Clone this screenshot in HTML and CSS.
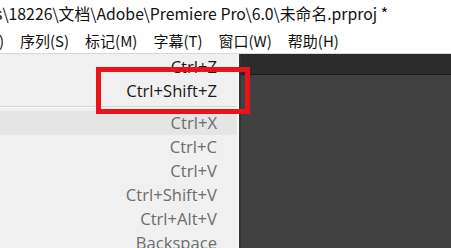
FILE: index.html
```html
<!DOCTYPE html>
<html lang="zh-CN">

<head>
	<title>Premiere Pro - 编辑菜单</title>
	<meta charset="UTF-8">
	<meta name="viewport" content="width=device-width, initial-scale=1.0">
	<link rel="stylesheet" href="styles.css">
</head>

<body>
	<div class="titlebar">
		<span class="title">s\18226\文档\Adobe\Premiere Pro\6.0\未命名.prproj *</span>
	</div>

	<div class="menubar">
		<span class="menu-item first">编辑(E)</span>
		<span class="menu-item">序列(S)</span>
		<span class="menu-item">标记(M)</span>
		<span class="menu-item">字幕(T)</span>
		<span class="menu-item">窗口(W)</span>
		<span class="menu-item">帮助(H)</span>
	</div>

	<div class="workspace">
		<div class="dropdown">
			<div class="row enabled">Ctrl+Z</div>
			<div class="row enabled">Ctrl+Shift+Z</div>
			<div class="separator"></div>
			<div class="row hover">Ctrl+X</div>
			<div class="row">Ctrl+C</div>
			<div class="row">Ctrl+V</div>
			<div class="row">Ctrl+Shift+V</div>
			<div class="row">Ctrl+Alt+V</div>
			<div class="row">Backspace</div>
		</div>

		<div class="panel">
			<div class="panel-header"></div>
			<div class="panel-body"></div>
		</div>

		<!-- annotation box round the redo shortcut -->
		<div class="mark"></div>
	</div>
</body>

</html>
```

FILE: styles.css
```css
* {
	box-sizing: border-box;
}

body {
	margin: 0;
	width: 451px;
	height: 248px;
	overflow: hidden;
	background-color: #fff;
	font-family: "Open Sans", "Noto Sans CJK SC", sans-serif;
	color: #111;
}

.titlebar {
	height: 28px;
	padding-top: 2px;
	white-space: nowrap;
	overflow: hidden;
	font-family: "Noto Sans CJK SC", sans-serif;
	font-size: 15.8px;
	line-height: 24px;
}

.title {
	display: inline-block;
	margin-left: -5px;
}

.menubar {
	height: 26px;
	display: flex;
	align-items: center;
	white-space: nowrap;
	overflow: hidden;
	border-bottom: 1px solid #d9d9d9;
	font-family: "Noto Sans CJK SC", sans-serif;
	font-size: 15px;
}

.menu-item {
	padding: 0 8px;
}

.menu-item.first {
	margin-left: -53px;
}

.workspace {
	position: relative;
	display: flex;
	height: 194px;
}

.dropdown {
	width: 239px;
	padding-top: 1px;
	background-color: #f0f0f0;
	border-right: 2px solid #f7f7f7;
	overflow: hidden;
}

.row {
	height: 24px;
	line-height: 24px;
	padding-right: 20px;
	text-align: right;
	font-size: 16.6px;
	color: #6d6d6d;
}

.row.enabled {
	color: #1a1a1a;
}

.row.hover {
	background-color: #e5e5e5;
}

.separator {
	height: 8px;
	border-top: 3px solid transparent;
}

.separator:after {
	content: "";
	display: block;
	height: 1px;
	background-color: #d5d5d5;
	border-bottom: 1px solid #fafafa;
}

.panel {
	flex: 1;
	display: flex;
	flex-direction: column;
	background-color: #414141;
	border-left: 2px solid #333;
}

.panel-header {
	height: 21px;
	background-color: #2c2c2c;
	border-bottom: 1px solid #1c1c1c;
}

.panel-body {
	flex: 1;
}

.mark {
	position: absolute;
	left: 96px;
	top: 13px;
	width: 154px;
	height: 47px;
	border: 5px solid #e8141a;
}
```
